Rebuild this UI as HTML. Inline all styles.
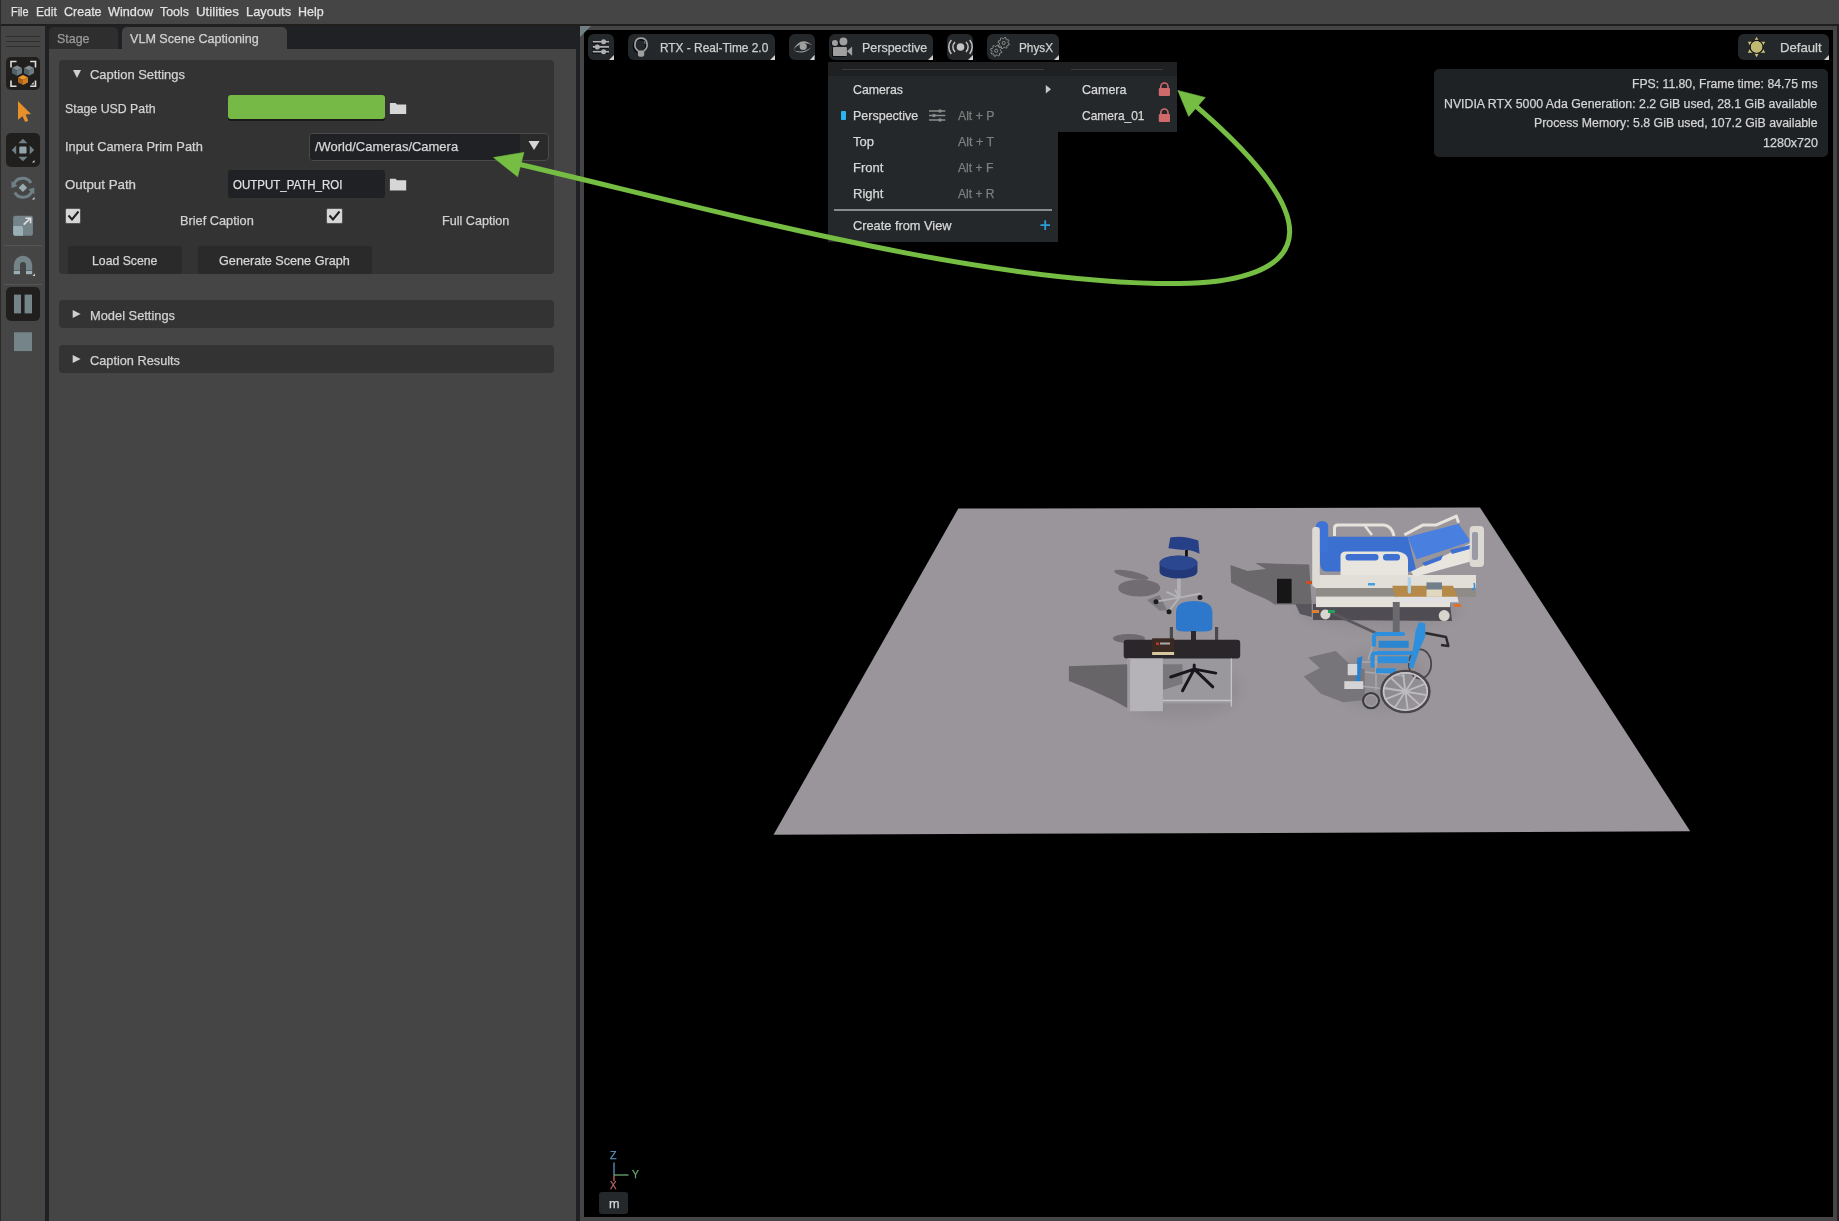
<!DOCTYPE html>
<html><head><meta charset="utf-8"><style>
html,body{margin:0;padding:0;background:#000;width:1839px;height:1221px;overflow:hidden;}
.r{position:absolute;}
.t{position:absolute;white-space:pre;font-family:"Liberation Sans", sans-serif;transform-origin:0 0;-webkit-text-stroke:0.25px currentColor;}
svg{position:absolute;left:0;top:0;}
</style></head><body>
<div class="r" style="left:0px;top:0px;width:1839px;height:24px;background:#454545;"></div>
<div class="r" style="left:0px;top:24px;width:1839px;height:2px;background:#211f1e;"></div>
<div class="r" style="left:0px;top:0px;width:1px;height:1221px;background:#2a2b27;"></div>
<div class="r" style="left:1px;top:26px;width:44px;height:1195px;background:#454545;"></div>
<div class="r" style="left:45px;top:26px;width:4px;height:1195px;background:#1f2124;"></div>
<div class="r" style="left:49px;top:26px;width:531px;height:23px;background:#1f2124;"></div>
<div class="r" style="left:49px;top:27px;width:69px;height:22px;background:#2e2e2e;border-radius:5px 5px 0 0;"></div>
<div class="r" style="left:122px;top:27px;width:165px;height:22px;background:#454545;border-radius:5px 5px 0 0;"></div>
<div class="r" style="left:49px;top:49px;width:527px;height:1172px;background:#454545;"></div>
<div class="r" style="left:576px;top:26px;width:4px;height:1195px;background:#1f2124;"></div>
<div class="r" style="left:580px;top:26px;width:1257px;height:1195px;background:#454545;"></div>
<div class="r" style="left:1837px;top:26px;width:2px;height:1195px;background:#1f2124;"></div>
<div class="r" style="left:584px;top:30px;width:1249px;height:1187px;background:#000000;"></div>
<div class="r" style="left:6px;top:35.8px;width:34px;height:1.2000000000000028px;background:#2e2e2e;"></div>
<div class="r" style="left:6px;top:40.8px;width:34px;height:1.2000000000000028px;background:#2e2e2e;"></div>
<div class="r" style="left:6px;top:45.8px;width:34px;height:1.2000000000000028px;background:#2e2e2e;"></div>
<div class="r" style="left:6px;top:57px;width:34px;height:33px;background:#211f1e;border-radius:5px;"></div>
<div class="r" style="left:6px;top:133px;width:34px;height:34px;background:#211f1e;border-radius:5px;"></div>
<div class="r" style="left:6px;top:287px;width:34px;height:34px;background:#211f1e;border-radius:5px;"></div>
<div class="r" style="left:4px;top:245px;width:38px;height:1px;background:#555555;"></div>
<div class="r" style="left:4px;top:284px;width:38px;height:1px;background:#555555;"></div>
<div class="r" style="left:59px;top:60px;width:495px;height:214px;background:#333333;border-radius:4px;"></div>
<div class="r" style="left:59px;top:300px;width:495px;height:27.5px;background:#333333;border-radius:4px;"></div>
<div class="r" style="left:59px;top:345px;width:495px;height:27.5px;background:#333333;border-radius:4px;"></div>
<div class="r" style="left:228px;top:97px;width:157px;height:24px;background:#1a1a1a;border-radius:3px;"></div>
<div class="r" style="left:228px;top:95px;width:157px;height:24px;background:#76b947;border-radius:3px;"></div>
<div class="r" style="left:309px;top:132.5px;width:239.5px;height:28.0px;background:#2a2a2a;border-radius:4px;border:1px solid #4a4a4a;box-sizing:border-box;"></div>
<div class="r" style="left:310px;top:133.5px;width:210px;height:26.0px;background:#1f2125;border-radius:3px 0 0 3px;"></div>
<div class="r" style="left:228px;top:170px;width:157px;height:28px;background:#1f2125;border-radius:3px;"></div>
<div class="r" style="left:65px;top:208px;width:16px;height:16px;background:#d6d6d6;border-radius:2px;border:1px solid #555;box-sizing:border-box;"></div>
<div class="r" style="left:326px;top:208px;width:16.5px;height:16px;background:#d6d6d6;border-radius:2px;border:1px solid #555;box-sizing:border-box;"></div>
<div class="r" style="left:68px;top:246px;width:114px;height:27.5px;background:#2a2a2a;border-radius:3px;"></div>
<div class="r" style="left:198px;top:246px;width:174px;height:27.5px;background:#2a2a2a;border-radius:3px;"></div>
<div class="r" style="left:588px;top:34px;width:26px;height:26px;background:#25282a;border-radius:6px;"></div>
<div class="r" style="left:628px;top:34px;width:147px;height:26px;background:#25282a;border-radius:6px;"></div>
<div class="r" style="left:789px;top:34px;width:25.5px;height:26px;background:#25282a;border-radius:6px;"></div>
<div class="r" style="left:829px;top:34px;width:104px;height:26px;background:#25282a;border-radius:6px;"></div>
<div class="r" style="left:947px;top:34px;width:26px;height:26px;background:#25282a;border-radius:6px;"></div>
<div class="r" style="left:987px;top:34px;width:72px;height:26px;background:#25282a;border-radius:6px;"></div>
<div class="r" style="left:1738px;top:34px;width:91px;height:26px;background:#25282a;border-radius:6px;"></div>
<div class="r" style="left:828px;top:62px;width:230px;height:180px;background:#25282b;"></div>
<div class="r" style="left:828px;top:62px;width:230px;height:14px;background:#1e2022;"></div>
<div class="r" style="left:842px;top:69px;width:202px;height:1px;background:#3a3c3e;"></div>
<div class="r" style="left:834px;top:209px;width:218px;height:1.5px;background:#8a8a8a;"></div>
<div class="r" style="left:841px;top:110.5px;width:4.5px;height:9.099999999999994px;background:#2bb5f0;border-radius:1px;"></div>
<div class="r" style="left:1056.5px;top:62px;width:1.0px;height:70px;background:#1c1d1f;"></div>
<div class="r" style="left:1057px;top:62px;width:120px;height:70px;background:#25282b;"></div>
<div class="r" style="left:1057px;top:62px;width:120px;height:14px;background:#1e2022;"></div>
<div class="r" style="left:1071px;top:69px;width:92px;height:1px;background:#3a3c3e;"></div>
<div class="r" style="left:1434px;top:69px;width:394px;height:88px;background:#1f2225;border-radius:5px;"></div>
<div class="r" style="left:599px;top:1192px;width:29px;height:22px;background:#25282a;border-radius:3px;"></div>
<svg width="1839" height="1221" viewBox="0 0 1839 1221">
<defs>
<filter id="bl" x="-20%" y="-20%" width="140%" height="140%"><feGaussianBlur stdDeviation="0.6"/></filter>
<filter id="bl2" x="-50%" y="-50%" width="200%" height="200%"><feGaussianBlur stdDeviation="6"/></filter>
<filter id="bl1" x="-20%" y="-20%" width="140%" height="140%"><feGaussianBlur stdDeviation="1.2"/></filter>
</defs>
<polygon points="958.3,508.5 1480,507.5 1690.2,831.3 773.5,834.8" fill="#99959a"/>
<!-- soft AO -->
<g filter="url(#bl2)" opacity="0.35">
<ellipse cx="1180" cy="690" rx="60" ry="28" fill="#7f7c82"/>
<ellipse cx="1380" cy="680" rx="45" ry="30" fill="#7f7c82"/>
<ellipse cx="1380" cy="610" rx="80" ry="18" fill="#7f7c82"/>
</g>
<g filter="url(#bl)">
<!-- ===== stool ===== -->
<ellipse cx="1139.2" cy="588" rx="21" ry="8.6" fill="#6f6c71"/>
<ellipse cx="1131.4" cy="574.8" rx="17.5" ry="3.6" transform="rotate(12 1131.4 574.8)" fill="#6f6c71"/>
<polygon points="1147,600 1159.5,595 1167.2,610.6 1159.5,610.6" fill="#7c797e"/>
<path d="M1170.3,537.4 Q1184,535 1198.3,540.6 L1199.5,553.8 Q1191,549.5 1182.8,549.9 L1168.4,548.3 Z" fill="#283f88"/>
<rect x="1185.1" y="550" width="2.7" height="7" fill="#111"/>
<path d="M1159.6,563.1 A18.9,7.5 0 0 1 1197.4,563.1 V571.5 A18.9,7.2 0 0 1 1159.6,571.5 Z" fill="#203878"/>
<ellipse cx="1178.5" cy="563.1" rx="18.9" ry="7.4" fill="#2a4690"/>
<rect x="1177" y="578.5" width="3.8" height="19" fill="#b0b0b4"/>
<g stroke="#b4b4b8" stroke-width="1.8" fill="none">
<path d="M1179.3,597.7 L1200.7,593.5 M1179.3,597.7 L1155.6,601.6 M1179.3,597.7 L1168.8,611.3 M1179.3,597.7 L1175,589.6 M1179.3,597.7 L1166.5,591.9"/>
</g>
<g fill="#1a1a1a"><circle cx="1156" cy="601.7" r="2.5"/><circle cx="1169" cy="611.8" r="2.5"/><circle cx="1200" cy="597.5" r="2.5"/></g>
<!-- ===== desk + chair ===== -->
<ellipse cx="1129" cy="638.5" rx="16" ry="4.5" fill="#6e6b70"/>
<polygon points="1068.9,666.2 1127.6,664.3 1129.6,709.3 1113.9,700.5 1088.5,688.7 1068.9,680.9" fill="#686569"/>
<rect x="1162.9" y="658.4" width="69" height="45" fill="#9b989d"/>
<polygon points="1162.9,664.3 1182.5,664.3 1182.5,683.8 1162.9,690" fill="#7a777c"/>
<path d="M1176,612 Q1176,601 1194,601 Q1212.4,601 1212.4,612 V628 Q1212,631.5 1204,631.5 H1184 Q1176,631.5 1176,628 Z" fill="#2f78cc"/>
<rect x="1191" y="631" width="5" height="10" fill="#2a2a2c"/>
<rect x="1169.8" y="627" width="3.2" height="13.5" fill="#4a4a4e"/>
<rect x="1215" y="627" width="3.2" height="13.5" fill="#4a4a4e"/>
<rect x="1123.7" y="639.8" width="116.5" height="18.6" rx="3" fill="#2c2729"/>
<rect x="1152.1" y="638.3" width="22" height="16.7" fill="#3a2b24"/>
<rect x="1152.1" y="652" width="22" height="3" fill="#d8c8a0"/>
<rect x="1156" y="642.5" width="3" height="2.5" fill="#c03030"/>
<rect x="1160" y="642.5" width="10" height="2" fill="#aaa"/>
<rect x="1127.6" y="658.4" width="35.3" height="52.8" fill="#b5b3b8"/>
<rect x="1127.6" y="658.4" width="2.5" height="52.8" fill="#9d9ba0"/>
<g stroke="#c4c4c6" stroke-width="1.3" fill="none"><path d="M1231.4,658.4 V706.4 M1162.9,700.5 H1231.4"/></g>
<g stroke="#18181a" stroke-width="3" fill="none" stroke-linecap="round">
<path d="M1194.2,669.1 L1170.7,677 M1194.2,669.1 L1182.5,690.7 M1194.2,669.1 L1212.8,686.8 M1194.2,669.1 L1215.7,673.1 M1194.2,669.1 L1194.2,665"/>
</g>
<!-- ===== bed ===== -->
<polygon points="1230.5,565.1 1247.5,571 1265.9,569 1255.4,563.1 1309.1,564.4 1311.7,604.4 1275,604.4 1265.9,599.1 1249.5,592 1231.1,582.8" fill="#6a676b"/>
<polygon points="1295.4,604 1311.7,604 1311.7,617 1300,614" fill="#59565b"/>
<polygon points="1313,604 1450,604 1452,621 1313,620" fill="#4f4d52"/>
<path d="M1330,612 L1378,634" stroke="#5a585c" stroke-width="2.5"/>
<rect x="1277" y="578.8" width="14.6" height="24.4" fill="#131313"/>
<rect x="1316" y="588" width="160" height="9" fill="#8f8b87"/>
<rect x="1316" y="596.6" width="134" height="10.5" fill="#e4e0da"/>
<rect x="1315" y="575" width="161" height="13" fill="#e2ded8"/>
<circle cx="1325.4" cy="614.5" r="5" fill="#d8d4ce"/>
<circle cx="1444.2" cy="615.6" r="5.5" fill="#d8d4ce"/>
<rect x="1306" y="581" width="6" height="3" fill="#c85020"/>
<rect x="1312" y="610" width="7" height="3" fill="#e08030"/>
<rect x="1328" y="610" width="7" height="3" fill="#20a060"/>
<rect x="1454" y="604" width="7" height="3" fill="#e07020"/>
<rect x="1368" y="583" width="7" height="2.5" fill="#40a0e0"/>
<path d="M1328,536.8 H1407.7 L1416.5,571.4 H1326 Q1320,571 1320,562 V545 Z" fill="#3b6fd0"/>
<rect x="1316" y="521.3" width="12.2" height="32" rx="5" fill="#3d72d6"/>
<polygon points="1407.7,537.1 1458.6,523.8 1470.8,541.5 1416.5,559.2" fill="#4a80e0"/>
<path d="M1334.5,536 V528 Q1334.5,525 1338,525 H1384 Q1392,526 1394,536" fill="none" stroke="#e6e2dc" stroke-width="3"/>
<path d="M1365,526 L1372,535" stroke="#e6e2dc" stroke-width="2.5"/>
<path d="M1404.4,534.9 L1423.2,524.9 H1436.5 L1456.4,516.1 L1458.6,522.7" fill="none" stroke="#e6e2dc" stroke-width="3" stroke-linejoin="round"/>
<path d="M1340.5,575 V556 Q1340.5,551.4 1346,551.4 H1398 Q1408,553 1408,560 V575 Z" fill="#e8e4de"/>
<rect x="1345.5" y="554" width="33" height="6.5" rx="3" fill="#3d70d0"/>
<rect x="1383" y="554" width="17" height="6.5" rx="3" fill="#3d70d0"/>
<polygon points="1411,571.4 1471.9,542.6 1475.2,560.3 1414.3,576.9" fill="#e8e4de"/>
<polygon points="1422,563 1443,555 1441,560 1425,566" fill="#3d70d0"/>
<polygon points="1450,550 1470,545 1470,549 1452,554" fill="#3d70d0"/>
<rect x="1469.6" y="526" width="14.4" height="41" rx="4" fill="#dcd8d2"/>
<rect x="1472" y="532" width="6" height="28" rx="2" fill="#9a9aa6"/>
<rect x="1312.2" y="527" width="7.6" height="60" rx="3" fill="#dedad4"/>
<polygon points="1392.2,585.8 1453,585.8 1457.5,596.8 1395.5,597.9" fill="#b5894a"/>
<polygon points="1395.5,596.8 1457.5,596.8 1458.6,602.3 1396,602.3" fill="#e0e0e2"/>
<rect x="1426.5" y="582.4" width="15.5" height="8" fill="#6f7f8a"/>
<rect x="1426.5" y="589.5" width="15.5" height="7.3" fill="#e0d8c0"/>
<rect x="1407.7" y="577" width="3.3" height="16.5" rx="1.5" fill="#a8d0e8"/>
<rect x="1392.8" y="602" width="6.9" height="32" fill="#6b6b6e"/>
<path d="M1474,583 Q1476,588 1472,590" fill="none" stroke="#3090d8" stroke-width="1.6"/>
<!-- ===== wheelchair ===== -->
<polygon points="1308.1,657.5 1335.8,651.1 1349.6,663.9 1364.5,669.2 1365,700 1343.2,702.2 1320.9,693.7 1303.8,676.6 1319.8,668.1" fill="#77747a"/>
<ellipse cx="1420" cy="664" rx="11.2" ry="14.6" fill="none" stroke="#4a4448" stroke-width="1.8"/>
<path d="M1425.2,633 L1446,637 L1448.4,646 L1441,645" fill="none" stroke="#2a2a2a" stroke-width="2.4" stroke-linejoin="round"/>
<g stroke="#a8a8ac" stroke-width="1.5" fill="none">
<path d="M1362,662 H1412 M1365,672 L1405,676 M1376,650 V690 M1360,686 L1395,690 M1373,645 L1368,660"/>
</g>
<polygon points="1419.1,621.9 1425.2,623.6 1425.2,636.5 1420,648.5 1413.1,668.3 1408.8,667.5 1413.1,647.7 1415.7,630.5" fill="#2e90dc"/>
<path d="M1374,645 V637 Q1374,634 1378,634 H1403" fill="none" stroke="#2e90dc" stroke-width="4.2" stroke-linecap="round"/>
<rect x="1378.7" y="640.8" width="30" height="7" fill="#2a86d0"/>
<path d="M1372.5,666 V656 Q1372.5,653 1377,653 H1411" fill="none" stroke="#2e90dc" stroke-width="4" stroke-linecap="round"/>
<rect x="1377.8" y="656.3" width="31" height="6.9" fill="#2e90dc"/>
<rect x="1376" y="668.3" width="20" height="5" fill="#2e90dc"/>
<polygon points="1357.2,658 1362.4,656.3 1359.8,683.8 1355.5,683.8" fill="#2a80d0"/>
<rect x="1347.7" y="664" width="9.5" height="11.2" fill="#d4d4d4"/>
<rect x="1344.3" y="681.2" width="19" height="7.8" fill="#d4d4d4"/>
<ellipse cx="1405.4" cy="691.5" rx="24" ry="20.5" fill="none" stroke="#4a4448" stroke-width="2.4"/>
<ellipse cx="1405.4" cy="691.5" rx="21.8" ry="18.6" fill="none" stroke="#c6c6ca" stroke-width="1.6"/>
<path d="M1405.4,691.5 L1426.5,695.2 M1405.4,691.5 L1419.9,705.1 M1405.4,691.5 L1407.8,709.9 M1405.4,691.5 L1394.8,707.6 M1405.4,691.5 L1385.8,699.2 M1405.4,691.5 L1384.3,687.8 M1405.4,691.5 L1390.9,677.9 M1405.4,691.5 L1403.0,673.1 M1405.4,691.5 L1416.0,675.4 M1405.4,691.5 L1425.0,683.8" stroke="#bcbcc0" stroke-width="1.8"/>
<ellipse cx="1371" cy="700.6" rx="8" ry="7.6" fill="none" stroke="#3a3a3e" stroke-width="2"/>
<ellipse cx="1371" cy="700.6" rx="6" ry="5.6" fill="none" stroke="#a0a0a4" stroke-width="1"/>
</g>
</svg>

<svg width="1839" height="1221" viewBox="0 0 1839 1221">
<!-- select mode: brackets -->
<g fill="none" stroke="#dcdcdc" stroke-width="1.6">
<path d="M11,67.5 V61.5 H16.5"/><path d="M30.2,61.5 H35.5 V67.5"/><path d="M11,80.6 V86.2 H16.5"/><path d="M30.2,86.2 H35.5 V80.6"/>
</g>
<polygon points="31.2,84.5 33.7,81.9 33.7,84.5" fill="#dcdcdc"/>
<!-- cubes -->
<g>
<polygon points="17,65.5 22,68 17,70.5 12,68" fill="#828d91"/>
<polygon points="12,68 17,70.5 17,75.7 12,73.2" fill="#4f6269"/>
<polygon points="22,68 17,70.5 17,75.7 22,73.2" fill="#6c7b81"/>
<polygon points="29,65.5 34,68 29,70.5 24,68" fill="#828d91"/>
<polygon points="24,68 29,70.5 29,75.7 24,73.2" fill="#4f6269"/>
<polygon points="34,68 29,70.5 29,75.7 34,73.2" fill="#6c7b81"/>
<polygon points="23,75 28,77.5 23,80 18,77.5" fill="#f0962a"/>
<polygon points="18,77.5 23,80 23,85 18,82.5" fill="#a8621a"/>
<polygon points="28,77.5 23,80 23,85 28,82.5" fill="#d07f22"/>
</g>
<!-- arrow cursor -->
<polygon points="18,100.9 31,113.9 25.6,114.4 28.3,120.7 25.2,122 22.5,116.2 18,119.8" fill="#e8912a"/>
<!-- move -->
<g fill="#6f8187">
<polygon points="22.9,138.7 27.5,143.2 18.3,143.2"/>
<polygon points="22.9,161.2 27.5,156.8 18.3,156.8"/>
<polygon points="11.7,150 16.2,145.4 16.2,154.6"/>
<polygon points="34.2,150 29.7,145.4 29.7,154.6"/>
</g>
<rect x="19.3" y="146.4" width="7.2" height="7.2" rx="1.2" fill="#92a5ab"/>
<polygon points="32,162.5 34.5,160 34.5,162.5" fill="#dcdcdc"/>
<!-- rotate -->
<g fill="none" stroke="#6f8187" stroke-width="3">
<path d="M14,184 A9.5,9.5 0 0 1 31,183"/>
<path d="M31.8,191.5 A9.5,9.5 0 0 1 14.8,192.5"/>
</g>
<polygon points="11.5,181 17.5,186 11.5,188" fill="#6f8187"/>
<polygon points="34.3,194.5 28.3,189.5 34.3,187.5" fill="#6f8187"/>
<polygon points="22.9,183.5 27.2,187.8 22.9,192.1 18.6,187.8" fill="#97aab0"/>
<polygon points="32,199.5 34.5,197 34.5,199.5" fill="#dcdcdc"/>
<!-- scale -->
<rect x="13.2" y="215.8" width="19.7" height="20" rx="2" fill="#748489"/>
<path d="M13.2,226 H21 A2,2 0 0 1 23,228 V235.8 H15.2 A2,2 0 0 1 13.2,233.8 Z" fill="#9ab0b6"/>
<g stroke="#e0e0e0" stroke-width="1.6" fill="none"><path d="M23.7,224.7 L30.3,218.4"/><path d="M25.5,218.2 H30.6 V223.3"/></g>
<!-- magnet -->
<path d="M13.8,270.6 V264.9 A9.2,9.2 0 0 1 32.2,264.9 V270.6 H26 V265 A3,3 0 0 0 20,265 V270.6 Z" fill="#748489"/>
<rect x="13.8" y="271" width="6.2" height="3.2" fill="#9ab0b6"/>
<rect x="26" y="271" width="6.2" height="3.2" fill="#9ab0b6"/>
<polygon points="32.5,276 35,273.5 35,276" fill="#dcdcdc"/>
<!-- pause -->
<rect x="14" y="294.6" width="7" height="18.8" fill="#748489"/>
<rect x="24.6" y="294.6" width="7.4" height="18.8" fill="#748489"/>
<!-- stop -->
<rect x="14" y="332.3" width="18" height="18.8" fill="#748489"/>

<!-- viewport toolbar corner triangles -->
<g fill="#d0d0d0">
<polygon points="609,60 614,60 614,55"/>
<polygon points="770,60 775,60 775,55"/>
<polygon points="809.9,60 814.7,60 814.7,54.8"/>
<polygon points="928,60 933,60 933,55"/>
<polygon points="968,60 973,60 973,55"/>
<polygon points="1054,60 1059,60 1059,55"/>
<polygon points="1824,60 1829,60 1829,55"/>
</g>
<!-- viewport top-left corner triangle -->
<polygon points="580,26 591,26 580,37" fill="#6f7f84"/>
<!-- sliders -->
<g stroke="#0a0f18" stroke-width="2" fill="none" transform="translate(-0.8,1)">
<path d="M592.8,41.8 H609 M592.8,46.9 H609 M592.8,51.7 H609"/>
</g>
<g stroke="#b0b0b0" stroke-width="1.6" fill="none">
<path d="M592.8,41.8 H609 M592.8,46.9 H609 M592.8,51.7 H609"/>
</g>
<g fill="#b0b0b0"><circle cx="603.6" cy="41.8" r="2.5"/><circle cx="597.3" cy="46.9" r="2.5"/><circle cx="603.6" cy="51.7" r="2.5"/></g>
<!-- bulb -->
<g transform="translate(-1.2,1.2)" fill="none" stroke="#050a14" stroke-width="1.8"><path d="M638.3,51 C633,47.5 634,38.1 641,38.1 C648,38.1 649,47.5 643.7,51"/></g>
<path d="M638.3,51 C633,47.5 634,38.1 641,38.1 C648,38.1 649,47.5 643.7,51" fill="none" stroke="#a0a0a0" stroke-width="1.7"/>
<path d="M644,41 Q645,42.5 645,44" fill="none" stroke="#a0a0a0" stroke-width="0.8"/>
<path d="M638,50.6 H644.2 V55 Q644.2,56.8 641,56.8 Q638,56.8 638,55 Z" fill="#a0a0a0"/>
<!-- eye -->
<circle cx="803.2" cy="46.5" r="3.6" fill="#a0a0a0"/>
<path d="M793,50 Q801,35 812.5,45.5 Q802,39.5 793,50 Z" fill="#a0a0a0"/>
<path d="M793.5,50.3 Q803,56 811.5,47.2 Q803,53.5 793.5,50.3 Z" fill="#a0a0a0"/>
<!-- camera -->
<g fill="#0a0f18" transform="translate(-1,1)"><circle cx="834.9" cy="43" r="3"/><circle cx="843.4" cy="41.5" r="4"/><rect x="833" y="47" width="13.9" height="9.1" rx="1.2"/></g>
<g fill="#a0a0a0"><circle cx="834.9" cy="43" r="3"/><circle cx="843.4" cy="41.5" r="4"/><rect x="833" y="47" width="13.9" height="9.1" rx="1.2"/><polygon points="846.9,51.2 852.1,46.5 852.1,55.7"/></g>
<!-- radio -->
<circle cx="960.5" cy="47" r="3.8" fill="#c4c4c4"/>
<g fill="none" stroke="#c4c4c4" stroke-width="1.5">
<path d="M955,42 A7,7 0 0 0 955,52"/><path d="M966,42 A7,7 0 0 1 966,52"/>
<path d="M951.3,40 A11,11 0 0 0 951.3,54"/><path d="M969.7,40 A11,11 0 0 1 969.7,54"/>
</g>
<!-- gears -->
<g fill="none" stroke="#8c8c8c" stroke-width="1">
<path d="M1000.50,50.70 L1001.84,51.50 L1001.47,52.88 L999.90,52.89 L999.24,53.74 L999.62,55.26 L998.38,55.97 L997.27,54.86 L996.20,55.00 L995.40,56.34 L994.02,55.97 L994.01,54.40 L993.16,53.74 L991.64,54.12 L990.93,52.88 L992.04,51.77 L991.90,50.70 L990.56,49.90 L990.93,48.52 L992.50,48.51 L993.16,47.66 L992.78,46.14 L994.02,45.43 L995.13,46.54 L996.20,46.40 L997.00,45.06 L998.38,45.43 L998.39,47.00 L999.24,47.66 L1000.76,47.28 L1001.47,48.52 L1000.36,49.63 Z"/><circle cx="996.2" cy="50.7" r="1.6"/>
<path d="M1008.00,43.00 L1009.34,43.80 L1008.97,45.18 L1007.40,45.19 L1006.74,46.04 L1007.12,47.56 L1005.88,48.27 L1004.77,47.16 L1003.70,47.30 L1002.90,48.64 L1001.52,48.27 L1001.51,46.70 L1000.66,46.04 L999.14,46.42 L998.43,45.18 L999.54,44.07 L999.40,43.00 L998.06,42.20 L998.43,40.82 L1000.00,40.81 L1000.66,39.96 L1000.28,38.44 L1001.52,37.73 L1002.63,38.84 L1003.70,38.70 L1004.50,37.36 L1005.88,37.73 L1005.89,39.30 L1006.74,39.96 L1008.26,39.58 L1008.97,40.82 L1007.86,41.93 Z"/><circle cx="1003.7" cy="43" r="1.6"/>
</g>
<!-- sun -->
<g fill="#c9c276">
<polygon points="1756.6,36.7 1765.2,52.8 1747.8,52.8"/>
<polygon points="1756.6,57.2 1765.2,41.7 1747.8,41.7"/>
</g>
<circle cx="1756.6" cy="46.9" r="6.5" fill="none" stroke="#15181a" stroke-width="1.2"/>
<circle cx="1756.6" cy="46.9" r="5.6" fill="#bfb972"/>
<!-- menu items -->
<polygon points="1045.8,85 1051,89.2 1045.8,93.5" fill="#c8c8c8"/>
<g stroke="#8c8c8c" stroke-width="1.3"><path d="M929,111 H945.3 M929,115.5 H945.3 M929,120 H945.3"/></g>
<g fill="#8c8c8c"><circle cx="940" cy="111" r="1.8"/><circle cx="934" cy="115.5" r="1.8"/><circle cx="940" cy="120" r="1.8"/></g>
<g stroke="#2a9fd6" stroke-width="1.8"><path d="M1040.4,225.2 H1050 M1045.2,220.3 V230"/></g>
<!-- locks -->
<g fill="#d06a6a">
<rect x="1158.8" y="88" width="11.2" height="7.9" rx="1"/>
<rect x="1158.8" y="114" width="11.2" height="7.9" rx="1"/>
</g>
<g fill="none" stroke="#d06a6a" stroke-width="1.6">
<path d="M1160.8,88 V86.6 A3.6,3.6 0 0 1 1168,86.6 V88"/>
<path d="M1160.8,114 V112.6 A3.6,3.6 0 0 1 1168,112.6 V114"/>
</g>
<!-- left panel: triangles -->
<polygon points="73,70 81,70 77,78" fill="#d0d0d0"/>
<polygon points="72.7,310 80.6,314 72.7,318" fill="#d0d0d0"/>
<polygon points="72.7,355 80.6,359 72.7,363" fill="#d0d0d0"/>
<!-- folders -->
<g fill="#d6d6d6">
<path d="M389.9,103 H395.5 L397,104.5 H406.2 V114.1 H389.9 Z"/>
<path d="M389.9,178.8 H395.5 L397,180.3 H406.2 V190.5 H389.9 Z"/>
</g>
<!-- combo triangle -->
<polygon points="528.5,140.9 539.6,140.9 534,150" fill="#d6d6d6"/>
<!-- checkmarks -->
<g fill="none" stroke="#202020" stroke-width="2"><path d="M68.5,215.5 L72,219.5 L78.5,211.5"/><path d="M329.5,215.5 L333,219.5 L339.5,211.5"/></g>
<!-- axis -->
<g stroke-width="1.3">
<path d="M614,1162.5 V1175" stroke="#5b93c8"/>
<path d="M614,1175 H628.5" stroke="#68a870"/>
<path d="M614,1175 V1181" stroke="#c56a6a"/>
</g>
</svg>

<div class="t" style="left:10.6px;top:5.0px;font-size:13px;line-height:13px;color:#e2e2e2;transform:scaleX(0.8400);">File</div>
<div class="t" style="left:35.6px;top:5.0px;font-size:13px;line-height:13px;color:#e2e2e2;transform:scaleX(0.9283);">Edit</div>
<div class="t" style="left:63.6px;top:5.0px;font-size:13px;line-height:13px;color:#e2e2e2;transform:scaleX(0.9633);">Create</div>
<div class="t" style="left:108.3px;top:5.0px;font-size:13px;line-height:13px;color:#e2e2e2;transform:scaleX(0.9751);">Window</div>
<div class="t" style="left:160.3px;top:5.0px;font-size:13px;line-height:13px;color:#e2e2e2;transform:scaleX(0.9519);">Tools</div>
<div class="t" style="left:196.4px;top:5.0px;font-size:13px;line-height:13px;color:#e2e2e2;transform:scaleX(1.0237);">Utilities</div>
<div class="t" style="left:246.4px;top:5.0px;font-size:13px;line-height:13px;color:#e2e2e2;transform:scaleX(0.9902);">Layouts</div>
<div class="t" style="left:298.4px;top:5.0px;font-size:13px;line-height:13px;color:#e2e2e2;transform:scaleX(0.9607);">Help</div>
<div class="t" style="left:57.0px;top:32.0px;font-size:13px;line-height:13px;color:#9a9a9a;transform:scaleX(0.9563);">Stage</div>
<div class="t" style="left:129.8px;top:32.0px;font-size:13px;line-height:13px;color:#d2d2d2;transform:scaleX(0.9678);">VLM Scene Captioning</div>
<div class="t" style="left:89.5px;top:68.0px;font-size:13px;line-height:13px;color:#d2d2d2;transform:scaleX(0.9957);">Caption Settings</div>
<div class="t" style="left:65.2px;top:102.0px;font-size:13px;line-height:13px;color:#d2d2d2;transform:scaleX(0.9487);">Stage USD Path</div>
<div class="t" style="left:65.2px;top:140.2px;font-size:13px;line-height:13px;color:#d2d2d2;transform:scaleX(0.9881);">Input Camera Prim Path</div>
<div class="t" style="left:315.3px;top:140.3px;font-size:13px;line-height:13px;color:#d6d6d6;transform:scaleX(0.9970);">/World/Cameras/Camera</div>
<div class="t" style="left:65.2px;top:178.0px;font-size:13px;line-height:13px;color:#d2d2d2;transform:scaleX(1.0232);">Output Path</div>
<div class="t" style="left:233.0px;top:178.1px;font-size:13px;line-height:13px;color:#e0e0e0;transform:scaleX(0.8839);">OUTPUT_PATH_ROI</div>
<div class="t" style="left:180.2px;top:213.7px;font-size:13px;line-height:13px;color:#d2d2d2;transform:scaleX(0.9820);">Brief Caption</div>
<div class="t" style="left:442.0px;top:213.7px;font-size:13px;line-height:13px;color:#d2d2d2;transform:scaleX(0.9701);">Full Caption</div>
<div class="t" style="left:92.1px;top:254.4px;font-size:13px;line-height:13px;color:#d6d6d6;transform:scaleX(0.9423);">Load Scene</div>
<div class="t" style="left:219.4px;top:254.4px;font-size:13px;line-height:13px;color:#d6d6d6;transform:scaleX(0.9731);">Generate Scene Graph</div>
<div class="t" style="left:89.5px;top:308.5px;font-size:13px;line-height:13px;color:#d2d2d2;transform:scaleX(0.9884);">Model Settings</div>
<div class="t" style="left:89.5px;top:353.5px;font-size:13px;line-height:13px;color:#d2d2d2;transform:scaleX(0.9806);">Caption Results</div>
<div class="t" style="left:660.0px;top:41.0px;font-size:13px;line-height:13px;color:#d0d0d0;transform:scaleX(0.9140);">RTX - Real-Time 2.0</div>
<div class="t" style="left:861.5px;top:41.0px;font-size:13px;line-height:13px;color:#d0d0d0;transform:scaleX(0.9599);">Perspective</div>
<div class="t" style="left:1019.0px;top:41.0px;font-size:13px;line-height:13px;color:#d0d0d0;transform:scaleX(0.9048);">PhysX</div>
<div class="t" style="left:1780.4px;top:41.0px;font-size:13px;line-height:13px;color:#d0d0d0;transform:scaleX(1.0121);">Default</div>
<div class="t" style="left:853.3px;top:83.2px;font-size:13px;line-height:13px;color:#d8d8d8;transform:scaleX(0.9479);">Cameras</div>
<div class="t" style="left:853.3px;top:109.0px;font-size:13px;line-height:13px;color:#d8d8d8;transform:scaleX(0.9614);">Perspective</div>
<div class="t" style="left:958.0px;top:109.0px;font-size:13px;line-height:13px;color:#7f7f7f;transform:scaleX(0.9387);">Alt + P</div>
<div class="t" style="left:853.3px;top:135.0px;font-size:13px;line-height:13px;color:#d8d8d8;transform:scaleX(1.0015);">Top</div>
<div class="t" style="left:958.0px;top:135.0px;font-size:13px;line-height:13px;color:#7f7f7f;transform:scaleX(0.9548);">Alt + T</div>
<div class="t" style="left:853.3px;top:161.0px;font-size:13px;line-height:13px;color:#d8d8d8;transform:scaleX(1.0051);">Front</div>
<div class="t" style="left:958.0px;top:161.0px;font-size:13px;line-height:13px;color:#7f7f7f;transform:scaleX(0.9357);">Alt + F</div>
<div class="t" style="left:853.3px;top:187.0px;font-size:13px;line-height:13px;color:#d8d8d8;transform:scaleX(1.0046);">Right</div>
<div class="t" style="left:958.0px;top:187.0px;font-size:13px;line-height:13px;color:#7f7f7f;transform:scaleX(0.9270);">Alt + R</div>
<div class="t" style="left:853.3px;top:219.0px;font-size:13px;line-height:13px;color:#d8d8d8;transform:scaleX(0.9832);">Create from View</div>
<div class="t" style="left:1082.2px;top:83.2px;font-size:13px;line-height:13px;color:#d8d8d8;transform:scaleX(0.9622);">Camera</div>
<div class="t" style="left:1082.2px;top:108.8px;font-size:13px;line-height:13px;color:#d8d8d8;transform:scaleX(0.9200);">Camera_01</div>
<div class="t" style="left:1632.0px;top:77.7px;font-size:12.5px;line-height:12.5px;color:#d4d4d4;transform:scaleX(0.9762);">FPS: 11.80, Frame time: 84.75 ms</div>
<div class="t" style="left:1444.4px;top:97.7px;font-size:12.5px;line-height:12.5px;color:#d4d4d4;transform:scaleX(0.9861);">NVIDIA RTX 5000 Ada Generation: 2.2 GiB used, 28.1 GiB available</div>
<div class="t" style="left:1533.9px;top:116.8px;font-size:12.5px;line-height:12.5px;color:#d4d4d4;transform:scaleX(0.9839);">Process Memory: 5.8 GiB used, 107.2 GiB available</div>
<div class="t" style="left:1762.6px;top:137.2px;font-size:12.5px;line-height:12.5px;color:#d4d4d4;transform:scaleX(1.0014);">1280x720</div>
<div class="t" style="left:608.5px;top:1196.5px;font-size:13px;line-height:13px;color:#d8d8d8;transform:scaleX(0.9683);">m</div>
<div class="t" style="left:609.8px;top:1150.0px;font-size:11px;line-height:11px;color:#5b93c8;transform:scaleX(0.9652);">Z</div>
<div class="t" style="left:631.5px;top:1169.1px;font-size:11px;line-height:11px;color:#68a870;transform:scaleX(0.9532);">Y</div>
<div class="t" style="left:609.8px;top:1179.7px;font-size:11px;line-height:11px;color:#c56a6a;transform:scaleX(0.8851);">X</div>
<svg width="1839" height="1221" viewBox="0 0 1839 1221">
<path d="M 517.94,163.96 C 711.67,209.17 981.83,284.83 1179.31,283.54 C 1222.31,283.26 1288.33,275.15 1289.63,232.70 C 1290.89,191.77 1227.69,133.62 1195.95,106.19" fill="none" stroke="#76bd43" stroke-width="5"/>
<polygon points="493.5,157.5 523.9,152.4 517.6,176.7" fill="#76bd43" stroke="#76bd43" stroke-width="0.6" stroke-linejoin="round"/>
<polygon points="1177.8,90.4 1205.3,97.5 1188.7,116.4" fill="#76bd43" stroke="#76bd43" stroke-width="0.6" stroke-linejoin="round"/>
</svg>
</body></html>
